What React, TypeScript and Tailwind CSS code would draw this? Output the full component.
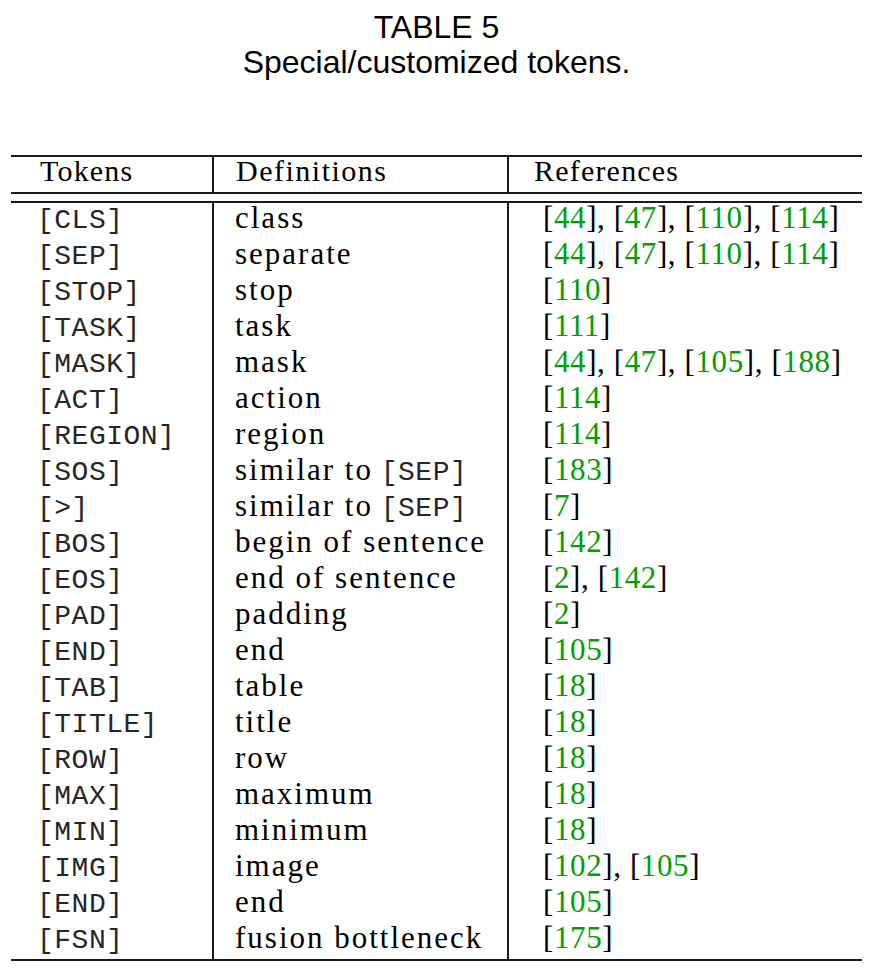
import React from "react";

type Row = {
  token: string;
  def: string;
  defCode?: string;
  refs: string[];
};

const rows: Row[] = [
  { token: "[CLS]", def: "class", refs: ["44", "47", "110", "114"] },
  { token: "[SEP]", def: "separate", refs: ["44", "47", "110", "114"] },
  { token: "[STOP]", def: "stop", refs: ["110"] },
  { token: "[TASK]", def: "task", refs: ["111"] },
  { token: "[MASK]", def: "mask", refs: ["44", "47", "105", "188"] },
  { token: "[ACT]", def: "action", refs: ["114"] },
  { token: "[REGION]", def: "region", refs: ["114"] },
  { token: "[SOS]", def: "similar to", defCode: "[SEP]", refs: ["183"] },
  { token: "[>]", def: "similar to", defCode: "[SEP]", refs: ["7"] },
  { token: "[BOS]", def: "begin of sentence", refs: ["142"] },
  { token: "[EOS]", def: "end of sentence", refs: ["2", "142"] },
  { token: "[PAD]", def: "padding", refs: ["2"] },
  { token: "[END]", def: "end", refs: ["105"] },
  { token: "[TAB]", def: "table", refs: ["18"] },
  { token: "[TITLE]", def: "title", refs: ["18"] },
  { token: "[ROW]", def: "row", refs: ["18"] },
  { token: "[MAX]", def: "maximum", refs: ["18"] },
  { token: "[MIN]", def: "minimum", refs: ["18"] },
  { token: "[IMG]", def: "image", refs: ["102", "105"] },
  { token: "[END]", def: "end", refs: ["105"] },
  { token: "[FSN]", def: "fusion bottleneck", refs: ["175"] },
];

const serif = "font-['Liberation_Serif',serif] text-[31px]";
const mono = "font-['Liberation_Mono',monospace] text-[28px] text-[#262626] tracking-[0.5px]";

const Refs = ({ refs }: { refs: string[] }) => (
  <span className="tracking-[0.6px]">
    {refs.map((r, i) => (
      <span key={i}>
        [<span className="text-[#00a000]">{r}</span>]{i < refs.length - 1 ? ", " : ""}
      </span>
    ))}
  </span>
);

const App = () => {
  return (
    <div className="bg-white w-[892px] min-h-[974px] pl-[11px] text-black">
      <div className="w-[851px]">
        {/* caption */}
        <div className="pt-[10px] text-center font-['Liberation_Sans',sans-serif] text-[32px] leading-[35px]">
          <div>TABLE 5</div>
          <div>Special/customized tokens.</div>
        </div>

        {/* table */}
        <div className="mt-[75px] border-t-2 border-b-2 border-[#1a1a1a]">
          <div className="grid grid-cols-[201px_295px_355px] h-[35px] leading-[28px] font-['Liberation_Serif',serif] text-[30px]">
            <div className="pl-[29px] tracking-[1.2px]">Tokens</div>
            <div className="border-l-2 border-[#1a1a1a] pl-[22px] tracking-[1.5px]">Definitions</div>
            <div className="border-l-2 border-[#1a1a1a] pl-[25px] tracking-[1.2px]">References</div>
          </div>
          <div className="h-[2px] bg-[#1a1a1a]" />
          <div className="h-[7px]" />
          <div className="h-[2px] bg-[#1a1a1a]" />

          {rows.map((row, i) => (
            <div key={i} className="grid grid-cols-[201px_295px_355px] h-[36px]">
              <div className={`pl-[26px] leading-[35px] whitespace-pre ${mono}`}>{row.token}</div>
              <div className={`border-l-2 border-[#1a1a1a] pl-[21px] leading-[30px] whitespace-nowrap ${serif}`}>
                <span className="tracking-[2px]">{row.def}</span>
                {row.defCode && (
                  <>
                    {" "}
                    <span className={`${mono} leading-[30px]`}>{row.defCode}</span>
                  </>
                )}
              </div>
              <div className={`border-l-2 border-[#1a1a1a] pl-[34px] leading-[30px] whitespace-nowrap ${serif}`}>
                <Refs refs={row.refs} />
              </div>
            </div>
          ))}
        </div>
      </div>
    </div>
  );
};

export default App;
